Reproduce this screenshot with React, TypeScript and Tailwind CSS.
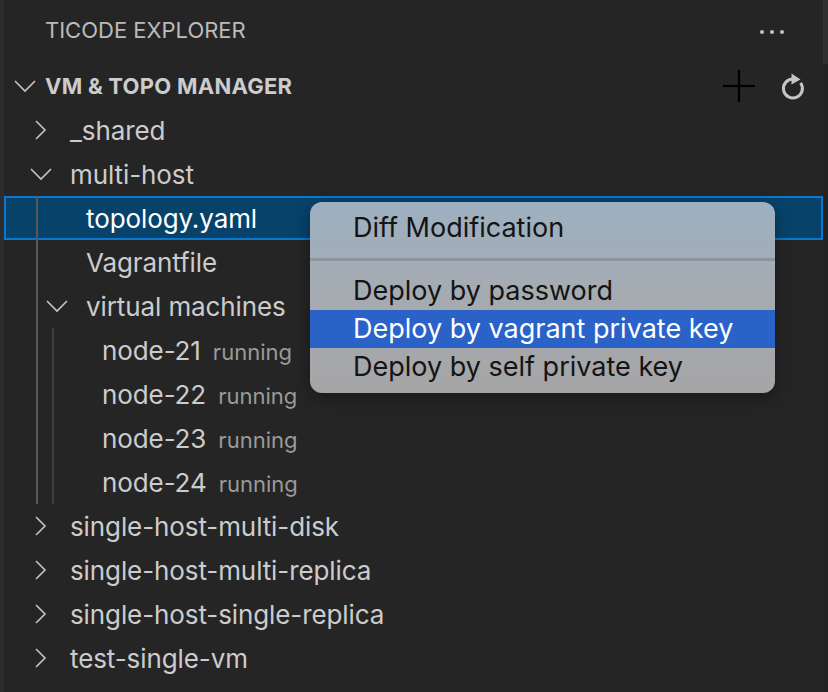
import React from "react";

const FONT = { fontFamily: 'Inter, "Noto Sans", "Liberation Sans", sans-serif' };

function ChevronRight() {
  return (
    <svg width="14" height="20" viewBox="0 0 14 20" fill="none">
      <polyline points="2,1 11,10 2,19" stroke="#c5c5c5" strokeWidth="1.6" fill="none" />
    </svg>
  );
}

function ChevronDown() {
  return (
    <svg width="22" height="14" viewBox="0 0 22 14" fill="none">
      <polyline points="1,2 11,12 21,2" stroke="#c5c5c5" strokeWidth="1.6" fill="none" />
    </svg>
  );
}

type RowProps = {
  level: number;
  chevron?: "right" | "down" | null;
  label: string;
  desc?: string;
  selected?: boolean;
};

function Row({ level, chevron = null, label, desc, selected }: RowProps) {
  const pads: Record<number, string> = { 1: "pl-[23px]", 2: "pl-[39px]", 3: "pl-[55px]" };
  return (
    <div
      className={`h-[44px] flex items-center ${pads[level]} ${
        selected ? "bg-[#07426b] border-2 border-[#0b78cf]" : ""
      }`}
    >
      <div className={`w-[28px] flex items-center justify-center shrink-0 ${selected ? "-ml-[2px]" : ""}`}>
        {chevron === "right" && <ChevronRight />}
        {chevron === "down" && <ChevronDown />}
      </div>
      <div className="ml-[15px] flex items-baseline whitespace-nowrap">
        <span className={`text-[26px] tracking-[-0.1px] ${selected ? "text-white" : "text-[#cccccc]"}`}>{label}</span>
        {desc && <span className="ml-[12px] text-[22px] text-[#9a9a9a]">{desc}</span>}
      </div>
    </div>
  );
}

export default function App() {
  return (
    <div className="relative w-[828px] h-[692px] bg-[#252526] flex overflow-hidden" style={FONT}>
      <div className="w-[4px] bg-[#2c2c2c] shrink-0" />
      <div className="flex-1 flex flex-col">
        {/* header */}
        <div className="h-[64px] flex items-center justify-between pl-[41px] pr-[39px] pb-[3px]">
          <span className="text-[22px] text-[#bbbbbb]">TICODE EXPLORER</span>
          <div className="flex items-center gap-[6px] pt-[2px]">
            <span className="w-[4px] h-[4px] rounded-full bg-[#c5c5c5]" />
            <span className="w-[4px] h-[4px] rounded-full bg-[#c5c5c5]" />
            <span className="w-[4px] h-[4px] rounded-full bg-[#c5c5c5]" />
          </div>
        </div>
        {/* section header */}
        <div className="h-[44px] flex items-center pl-[10px] pr-[16px]">
          <div className="w-[22px] flex items-center justify-center">
            <ChevronDown />
          </div>
          <span className="ml-[9px] text-[22px] font-bold tracking-[0.25px] text-[#cccccc] whitespace-nowrap">VM &amp; TOPO MANAGER</span>
          <div className="flex-1" />
          <svg width="34" height="34" viewBox="0 0 34 34" className="mr-[23px]">
            <line x1="17" y1="1" x2="17" y2="33" stroke="#000" strokeWidth="2.2" />
            <line x1="1" y1="17" x2="33" y2="17" stroke="#000" strokeWidth="2.2" />
          </svg>
          <svg width="28" height="30" viewBox="0 0 28 30" className="mt-[1px]">
            <path d="M14 7 A9.5 9.5 0 1 0 21.6 10.9" stroke="#c5c5c5" strokeWidth="3" fill="none" />
            <polygon points="12.5,1.5 21.5,7.5 12.5,12.5" fill="#c5c5c5" />
          </svg>
        </div>
        {/* tree */}
        <Row level={1} chevron="right" label="_shared" />
        <Row level={1} chevron="down" label="multi-host" />
        <div className="relative">
          <div className="absolute left-[32px] top-0 bottom-0 w-[2px] bg-[#585858] z-10" />
          <Row level={2} label="topology.yaml" selected />
          <Row level={2} label="Vagrantfile" />
          <Row level={2} chevron="down" label="virtual machines" />
          <div className="relative">
            <div className="absolute left-[48px] top-0 bottom-0 w-[2px] bg-[#3e3e3e] z-10" />
            <Row level={3} label="node-21" desc="running" />
            <Row level={3} label="node-22" desc="running" />
            <Row level={3} label="node-23" desc="running" />
            <Row level={3} label="node-24" desc="running" />
          </div>
        </div>
        <Row level={1} chevron="right" label="single-host-multi-disk" />
        <Row level={1} chevron="right" label="single-host-multi-replica" />
        <Row level={1} chevron="right" label="single-host-single-replica" />
        <Row level={1} chevron="right" label="test-single-vm" />
      </div>
      <div className="w-[5px] shrink-0 flex flex-col">
        <div className="h-[64px] bg-[#2f2f2f]" />
        <div className="flex-1 bg-[#232323]" />
      </div>

      {/* context menu */}
      <div className="absolute left-[310px] top-[202px] w-[465px] h-[191px] rounded-[12px] overflow-hidden bg-gradient-to-b from-[#9db0c0] via-[#a5abb1] to-[#a5a5a6] shadow-[0_4px_16px_rgba(0,0,0,0.35)] z-20 pt-[7px]">
        <div className="h-[38px] flex items-center pl-[43px] text-[27px] text-[#141414]">Diff Modification</div>
        <div className="h-[25px] flex items-center">
          <div className="w-full h-[3px] bg-[#8b959c]" />
        </div>
        <div className="h-[38px] flex items-center pl-[43px] text-[27px] text-[#141414]">Deploy by password</div>
        <div className="h-[38px] flex items-center pl-[43px] text-[27px] text-white bg-[#2a62c8]">Deploy by vagrant private key</div>
        <div className="h-[38px] flex items-center pl-[43px] text-[27px] text-[#141414]">Deploy by self private key</div>
      </div>
    </div>
  );
}
